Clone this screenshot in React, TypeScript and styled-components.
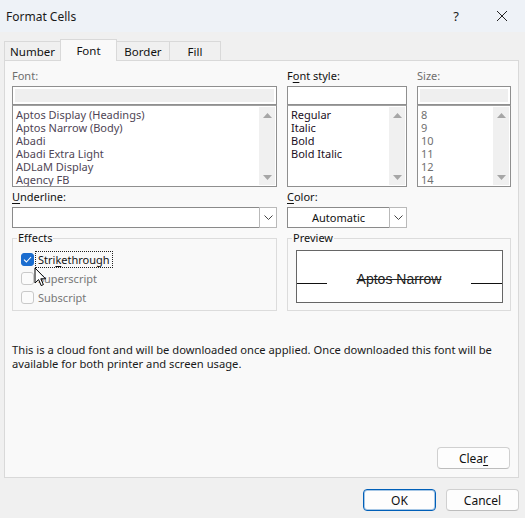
import React from "react";
import styled, { createGlobalStyle } from "styled-components";

const GlobalStyle = createGlobalStyle`
  html, body { margin: 0; padding: 0; background: #f0f0f0; }
  body {
    font-family: "Noto Sans", "Segoe UI", sans-serif;
    font-size: 11px;
    color: #000;
  }
  * { box-sizing: border-box; }
`;

const Window = styled.div`
  position: relative;
  width: 525px;
  height: 518px;
  background: #f0f0f0;
  display: flex;
  flex-direction: column;
  overflow: hidden;
`;

const TitleBar = styled.div`
  height: 32px;
  flex: none;
  display: flex;
  align-items: center;
  background: #eef2f7;
  padding-left: 6px;
`;

const TitleText = styled.div`
  flex: 1;
  font-size: 12px;
  color: #1a1a1a;
`;

const TitleButton = styled.div`
  width: 46px;
  height: 32px;
  display: flex;
  align-items: center;
  justify-content: center;
  color: #1a1a1a;
  font-size: 13px;
`;

const Body = styled.div`
  flex: 1;
  display: flex;
  flex-direction: column;
  padding: 7px 6px 0 4px;
`;

const TabStrip = styled.div`
  display: flex;
  align-items: flex-end;
  height: 22px;
  margin-bottom: -1px;
  position: relative;
  z-index: 1;
`;

const Tab = styled.div<{ $active?: boolean; $w: number }>`
  width: ${(p) => p.$w}px;
  height: ${(p) => (p.$active ? 22 : 20)}px;
  margin-left: -1px;
  &:first-child { margin-left: 0; }
  border: 1px solid #d9d9d9;
  border-bottom: ${(p) => (p.$active ? "none" : "1px solid #d9d9d9")};
  background: ${(p) => (p.$active ? "#f9f9f9" : "#f0f0f0")};
  display: flex;
  align-items: center;
  justify-content: center;
  padding-top: ${(p) => (p.$active ? 0 : 1)}px;
  font-size: 11.5px;
  color: #111;
`;

const Panel = styled.div`
  height: 418px;
  flex: none;
  border: 1px solid #d9d9d9;
  background: #f9f9f9;
  display: flex;
  flex-direction: column;
  padding: 7px 7px 8px 7px;
`;

const TopGrid = styled.div`
  display: grid;
  grid-template-columns: 265px 120px 94px;
  column-gap: 10px;
`;

const FieldLabel = styled.div<{ $disabled?: boolean; $top?: number }>`
  line-height: 14px;
  margin-top: ${(p) => (p.$top ?? 0) + 1}px;
  margin-bottom: 3px;
  color: ${(p) => (p.$disabled ? "#6e6e6e" : "#111")};
  u { text-decoration-thickness: 1px; text-underline-offset: 2px; }
`;

const TextInput = styled.div<{ $filled?: boolean }>`
  height: 19px;
  border: 1px solid #8f8f8f;
  background: ${(p) => (p.$filled ? "#efefef" : "#fff")};
  box-shadow: ${(p) => (p.$filled ? "inset 0 0 0 2px #fff" : "none")};
`;

const ListBox = styled.div`
  height: 82px;
  border: 1px solid #8f8f8f;
  border-top-color: #a0a0a0;
  background: #fff;
  display: flex;
`;

const ListItems = styled.div<{ $tone: "muted" | "dark" | "gray" }>`
  flex: 1;
  padding: 2px 3px 0 3px;
  overflow: hidden;
  color: ${(p) =>
    p.$tone === "dark" ? "#1c1024" : p.$tone === "muted" ? "#4f4656" : "#707070"};
`;

const ListItem = styled.div`
  line-height: 13px;
  height: 13px;
  white-space: nowrap;
`;

const ScrollBar = styled.div`
  width: 16px;
  margin: 1px 1px 1px 0;
  background: #f0f0f0;
  display: flex;
  flex-direction: column;
  justify-content: space-between;
`;

const ScrollArrow = styled.div`
  height: 16px;
  display: flex;
  align-items: center;
  justify-content: center;
`;

const Dropdown = styled.div`
  height: 21px;
  border: 1px solid #8a8a8a;
  background: #fff;
  display: flex;
  align-items: stretch;
`;

const DropValue = styled.div`
  flex: 1;
  display: flex;
  align-items: center;
  justify-content: center;
  color: #111;
`;

const DropButton = styled.div`
  width: 18px;
  border: 1px solid #b9b9b9;
  margin: -1px -1px -1px 0;
  background: #fff;
  display: flex;
  align-items: center;
  justify-content: center;
`;

const GroupBox = styled.fieldset<{ $span?: string }>`
  grid-column: ${(p) => p.$span ?? "auto"};
  margin: 3px 0 0 0;
  border: 1px solid #dcdcdc;
  padding: 5px 7px 3px 8px;
  min-width: 0;
`;

const GroupLegend = styled.legend`
  padding: 0 1px;
  margin-left: -4px;
  line-height: 14px;
  color: #111;
`;

const CheckRow = styled.div`
  height: 19px;
  display: flex;
  align-items: center;
`;

const CheckBox = styled.div<{ $checked?: boolean }>`
  width: 13px;
  height: 13px;
  border-radius: 3px;
  border: 1px solid ${(p) => (p.$checked ? "#1b6dcf" : "#c9c9c9")};
  background: ${(p) => (p.$checked ? "#1b6dcf" : "#fbfbfb")};
  display: flex;
  align-items: center;
  justify-content: center;
  flex: none;
`;

const CheckLabel = styled.span<{ $disabled?: boolean; $focused?: boolean }>`
  margin-left: 2px;
  padding: 0 2px;
  line-height: 15px;
  color: ${(p) => (p.$disabled ? "#777" : "#111")};
  outline: ${(p) => (p.$focused ? "1px dotted #222" : "none")};
  outline-offset: 0;
  u { text-decoration-thickness: 1px; text-underline-offset: 2px; }
`;

const PreviewBox = styled.div`
  height: 53px;
  border: 1px solid #666;
  background: #fff;
  display: flex;
  align-items: baseline;
  padding-top: 20px;
`;

const BaseLine = styled.span<{ $w: number }>`
  display: inline-block;
  width: ${(p) => p.$w}px;
  height: 0;
  border-bottom: 1px solid #111;
  flex: none;
`;

const PreviewText = styled.span`
  flex: 1;
  text-align: center;
  font-family: "Liberation Sans", Arial, sans-serif;
  font-size: 14px;
  color: #222;
  text-decoration: line-through;
  text-decoration-thickness: 1px;
`;

const InfoText = styled.div`
  margin-top: 32px;
  line-height: 14px;
  font-size: 11.2px;
  color: #1a1a1a;
`;

const PushButton = styled.div<{ $primary?: boolean }>`
  width: 73px;
  height: 22px;
  border-radius: 4px;
  border: 1px solid ${(p) => (p.$primary ? "#005fb8" : "#d0d0d0")};
  border-bottom-color: ${(p) => (p.$primary ? "#005fb8" : "#bdbdbd")};
  box-shadow: ${(p) => (p.$primary ? "inset 0 0 0 1px rgba(0,95,184,0.35)" : "none")};
  background: #fdfdfd;
  display: flex;
  align-items: center;
  justify-content: center;
  font-size: 12px;
  color: #111;
  u { text-decoration-thickness: 1px; text-underline-offset: 2px; }
`;

const ClearRow = styled.div`
  margin-top: auto;
  display: flex;
  justify-content: flex-end;
  padding-right: 1px;
`;

const Footer = styled.div`
  display: flex;
  justify-content: flex-end;
  gap: 10px;
  padding-top: 11px;
`;

const Cursor = styled.svg`
  position: absolute;
  left: 34px;
  top: 267px;
`;

const UpArrow = () => (
  <svg width="9" height="5" viewBox="0 0 9 5">
    <path d="M0 5 L4.5 0 L9 5 Z" fill="#a6a6a6" />
  </svg>
);
const DownArrow = () => (
  <svg width="9" height="5" viewBox="0 0 9 5">
    <path d="M0 0 L4.5 5 L9 0 Z" fill="#a6a6a6" />
  </svg>
);
const Chevron = () => (
  <svg width="9" height="5" viewBox="0 0 9 5">
    <path d="M0.5 0.5 L4.5 4.5 L8.5 0.5" fill="none" stroke="#444" strokeWidth="1" />
  </svg>
);
const Check = () => (
  <svg width="9" height="7" viewBox="0 0 9 7">
    <path d="M1 3.6 L3.4 6 L8 1" fill="none" stroke="#fff" strokeWidth="1.1" />
  </svg>
);

function List({ items, tone }: { items: string[]; tone: "muted" | "dark" | "gray" }) {
  return (
    <ListBox>
      <ListItems $tone={tone}>
        {items.map((t) => (
          <ListItem key={t}>{t}</ListItem>
        ))}
      </ListItems>
      <ScrollBar>
        <ScrollArrow>
          <UpArrow />
        </ScrollArrow>
        <ScrollArrow>
          <DownArrow />
        </ScrollArrow>
      </ScrollBar>
    </ListBox>
  );
}

export default function App() {
  return (
    <>
      <GlobalStyle />
      <Window>
        <TitleBar>
          <TitleText>Format Cells</TitleText>
          <TitleButton>?</TitleButton>
          <TitleButton>
            <svg width="12" height="12" viewBox="0 0 12 12">
              <path d="M1 1 L11 11 M11 1 L1 11" stroke="#222" strokeWidth="1" />
            </svg>
          </TitleButton>
        </TitleBar>
        <Body>
          <TabStrip>
            <Tab $w={57}>Number</Tab>
            <Tab $w={57} $active>Font</Tab>
            <Tab $w={54}>Border</Tab>
            <Tab $w={52}>Fill</Tab>
          </TabStrip>
          <Panel>
            <TopGrid>
              <FieldLabel $disabled>Font:</FieldLabel>
              <FieldLabel>
                F<u>o</u>nt style:
              </FieldLabel>
              <FieldLabel $disabled>Size:</FieldLabel>

              <TextInput $filled />
              <TextInput />
              <TextInput $filled />

              <List
                tone="muted"
                items={[
                  "Aptos Display (Headings)",
                  "Aptos Narrow (Body)",
                  "Abadi",
                  "Abadi Extra Light",
                  "ADLaM Display",
                  "Agency FB",
                ]}
              />
              <List tone="dark" items={["Regular", "Italic", "Bold", "Bold Italic"]} />
              <List tone="gray" items={["8", "9", "10", "11", "12", "14"]} />

              <FieldLabel $top={2}>
                <u>U</u>nderline:
              </FieldLabel>
              <FieldLabel $top={2}>
                <u>C</u>olor:
              </FieldLabel>
              <div />

              <Dropdown>
                <DropValue />
                <DropButton>
                  <Chevron />
                </DropButton>
              </Dropdown>
              <Dropdown>
                <DropValue>Automatic</DropValue>
                <DropButton>
                  <Chevron />
                </DropButton>
              </Dropdown>
              <div />

              <GroupBox>
                <GroupLegend>Effects</GroupLegend>
                <CheckRow>
                  <CheckBox $checked>
                    <Check />
                  </CheckBox>
                  <CheckLabel $focused>
                    Stri<u>k</u>ethrough
                  </CheckLabel>
                </CheckRow>
                <CheckRow>
                  <CheckBox />
                  <CheckLabel $disabled>Superscript</CheckLabel>
                </CheckRow>
                <CheckRow>
                  <CheckBox />
                  <CheckLabel $disabled>Subscript</CheckLabel>
                </CheckRow>
              </GroupBox>
              <GroupBox $span="2 / 4">
                <GroupLegend>Preview</GroupLegend>
                <PreviewBox>
                  <BaseLine $w={30} />
                  <PreviewText>Aptos Narrow</PreviewText>
                  <BaseLine $w={31} />
                </PreviewBox>
              </GroupBox>
            </TopGrid>
            <InfoText>
              This is a cloud font and will be downloaded once applied. Once downloaded this font will be
              <br />
              available for both printer and screen usage.
            </InfoText>
            <ClearRow>
              <PushButton>
                Clea<u>r</u>
              </PushButton>
            </ClearRow>
          </Panel>
          <Footer>
            <PushButton $primary>OK</PushButton>
            <PushButton>Cancel</PushButton>
          </Footer>
        </Body>
        <Cursor width="13" height="20" viewBox="0 0 13 20">
          <path
            d="M1 1 L1 16 L4.6 12.6 L7.2 18.6 L9.4 17.6 L6.8 11.8 L11.6 11.8 Z"
            fill="#fff"
            stroke="#000"
            strokeWidth="1"
            strokeLinejoin="round"
          />
        </Cursor>
      </Window>
    </>
  );
}
